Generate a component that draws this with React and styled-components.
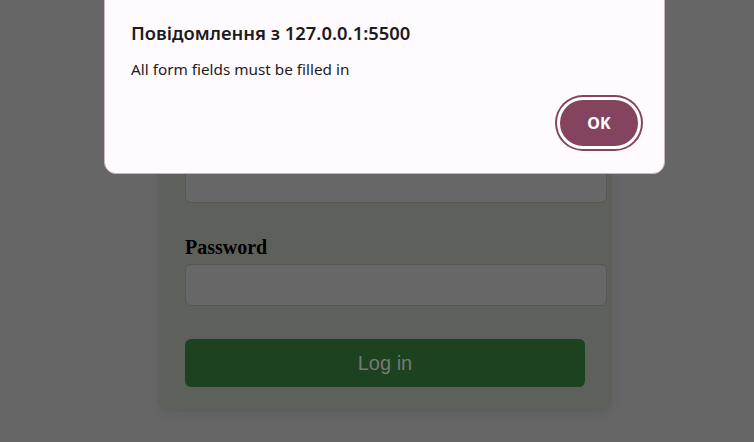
import React from "react";
import styled, { createGlobalStyle } from "styled-components";

const GlobalStyle = createGlobalStyle`
  html, body {
    margin: 0;
    padding: 0;
    background: #666666;
    height: 100%;
    overflow: hidden;
  }
`;

const Page = styled.div`
  position: relative;
  width: 754px;
  height: 442px;
  display: flex;
  justify-content: center;
  padding-top: 55px;
  box-sizing: border-box;
  font-family: "Liberation Serif", serif;
`;

const Card = styled.form`
  width: 400px;
  height: fit-content;
  padding: 25px 27px 25px 27px;
  margin-left: 16px;
  background: #5e605b;
  border-radius: 12px;
  box-shadow: 0 4px 12px rgba(0, 0, 0, 0.06);
`;

const Heading = styled.h2`
  margin: 0 0 20px;
  font-size: 28px;
  line-height: 33px;
  text-align: center;
  color: #111;
`;

const Label = styled.label`
  display: block;
  margin: ${({ $first }) => ($first ? "0" : "33px")} 0 6px;
  font-family: "Liberation Serif", serif;
  font-weight: bold;
  font-size: 20px;
  line-height: 22px;
  color: #000;
`;

const Input = styled.input`
  display: block;
  width: 400px;
  height: 20px;
  padding: 10px;
  margin: 0;
  border: 1px solid #555555;
  border-radius: 6px;
  background: #676767;
  outline: none;
`;

const Submit = styled.button`
  display: block;
  width: 400px;
  height: 48px;
  margin-top: 33px;
  border: none;
  border-radius: 6px;
  background: #1c4220;
  color: #787878;
  font-family: "Liberation Sans", Arial, sans-serif;
  font-size: 20px;
`;

const Dialog = styled.div`
  position: absolute;
  left: 104px;
  top: -12px;
  width: 561px;
  box-sizing: border-box;
  padding: 32px 21px 24px 26px;
  background: #fffafd;
  border: 1px solid #c9b8c1;
  border-radius: 12px;
  font-family: "Noto Sans", "Open Sans", sans-serif;
  color: #1d1b1e;
`;

const Title = styled.div`
  font-size: 18.4px;
  font-weight: 600;
  line-height: 24px;
`;

const Message = styled.div`
  margin-top: 14px;
  font-size: 15.3px;
  line-height: 20px;
`;

const Actions = styled.div`
  display: flex;
  justify-content: flex-end;
  margin-top: 18px;
`;

const OkButton = styled.button`
  width: 84px;
  height: 52px;
  margin-right: 2px;
  border: 3px solid #ffffff;
  border-radius: 26px;
  background: #84435f;
  box-shadow: 0 0 0 2px #84435f;
  color: #ffffff;
  font-family: "Noto Sans", "Open Sans", sans-serif;
  font-weight: 700;
  font-size: 16px;
`;

export default function App() {
  return (
    <>
      <GlobalStyle />
      <Page>
        <Card onSubmit={(e) => e.preventDefault()}>
          <Heading>Log in</Heading>
          <Label $first>Email</Label>
          <Input type="text" />
          <Label>Password</Label>
          <Input type="password" />
          <Submit type="submit">Log in</Submit>
        </Card>
        <Dialog role="alertdialog">
          <Title>Повідомлення з 127.0.0.1:5500</Title>
          <Message>All form fields must be filled in</Message>
          <Actions>
            <OkButton>OK</OkButton>
          </Actions>
        </Dialog>
      </Page>
    </>
  );
}
